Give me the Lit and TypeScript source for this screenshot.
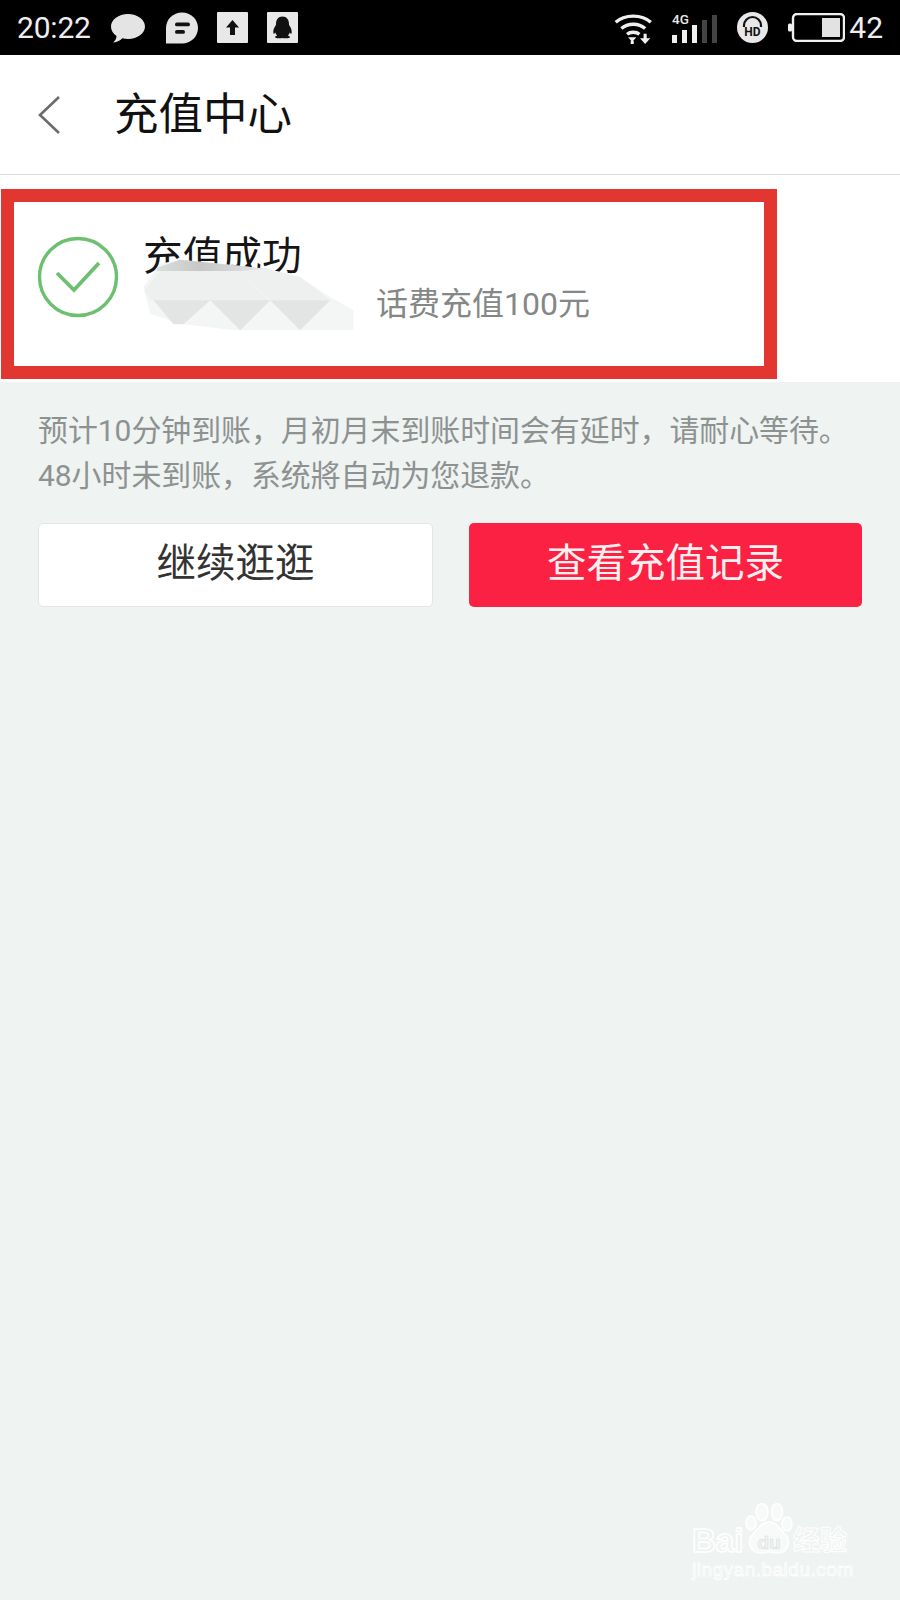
import { LitElement, html, css, svg } from "lit";
import { customElement } from "lit/decorators.js";

@customElement("app-root")
export class AppRoot extends LitElement {
  static styles = css`
    :host {
      display: block;
      position: relative;
      width: 900px;
      height: 1600px;
      overflow: hidden;
      background: #eff3f2;
      font-family: Roboto, "Noto Sans CJK SC", sans-serif;
    }
    .status {
      height: 55px;
      background: #000;
      color: #eee;
      display: flex;
      align-items: center;
      padding: 0 17px;
      font-size: 30px;
      line-height: 55px;
    }
    .status svg { display: block; flex: none; }
    .time { width: 93px; letter-spacing: -0.2px; }
    .s2 { margin-left: 20px; }
    .s3 { margin-left: 19px; }
    .s4 { margin-left: 19px; }
    .spacer { flex: 1; }
    .r1 { margin-left: 19px; }
    .r2 { margin-left: 19px; }
    .r3 { margin-left: 20px; }
    .num { margin-left: 4px; }
    .header {
      height: 119px;
      background: #fff;
      border-bottom: 1px solid #dcdcdc;
      display: flex;
      align-items: center;
      padding-left: 37px;
      box-sizing: content-box;
    }
    .back { display: block; width: 24px; height: 40px; margin-right: 53px; }
    .header h1 {
      margin: 0;
      font-size: 44.5px;
      font-weight: 400;
      color: #111;
      line-height: 1;
      position: relative;
      top: 1px;
    }
    .card {
      position: relative;
      height: 207px;
      background: #fff;
      display: flex;
      align-items: flex-start;
      padding: 62px 0 0 37px;
      box-sizing: border-box;
    }
    .check { display: block; width: 82px; height: 82px; margin-top: -1px; margin-right: 24px; flex: none; }
    .title {
      font-size: 39.700px;
      line-height: 46px;
      margin-top: -3px;
      color: #151515;
    }
    .sub {
      font-size: 32px;
      line-height: 40px;
      color: #848786;
      margin: 4px 0 0 233px;
      white-space: nowrap;
    }
    .annot {
      position: absolute;
      left: 1px;
      top: 14px;
      width: 776px;
      height: 190px;
      box-sizing: border-box;
      border: 13px solid #e23730;
    }
    .smudge {
      position: absolute;
      left: 140px;
      top: 82px;
      width: 217px;
      height: 75px;
      filter: blur(0.6px);
    }
    .note {
      padding: 26px 38px 0;
      font-size: 29.900px;
      line-height: 45px;
      color: #8d9291;
      white-space: nowrap;
    }
    .actions {
      display: flex;
      gap: 36px;
      padding: 25px 38px 0;
    }
    .btn {
      flex: 1;
      height: 84px;
      box-sizing: border-box;
      border-radius: 5px;
      display: flex;
      align-items: center;
      justify-content: center;
      font-size: 39.500px;
      padding-bottom: 12px;
    }
    .ghost { background: #fff; border: 1px solid #e3e6e5; color: #333; }
    .primary { background: #fb2142; color: #fdeef0; }
    .mark {
      position: absolute;
      left: 690px;
      top: 1500px;
      width: 170px;
      height: 84px;
      color: #eff3f2;
      -webkit-text-stroke: 1.500px #fff;
    }
    .mark svg { position: absolute; left: 55px; top: 0; width: 50px; height: 56px; }
    .bai {
      position: absolute;
      left: 2px;
      top: 21px;
      font: 700 33px/40px "Liberation Sans", sans-serif;
    }
    .jy {
      position: absolute;
      left: 103px;
      top: 26px;
      font-size: 27px;
      line-height: 30px;
      font-weight: 700;
      white-space: nowrap;
      -webkit-text-stroke: 1px #fff;
    }
    .url {
      position: absolute;
      left: 2px;
      top: 58px;
      font: 400 19px/24px "Liberation Sans", sans-serif;
      letter-spacing: 0.5px;
      white-space: nowrap;
      -webkit-text-stroke: 0.800px #fff;
    }
    .du {
      font: 700 19px "Liberation Sans", sans-serif;
      fill: #eff3f2;
      stroke: #d9dedc;
      stroke-width: 0.600px;
    }
  `;

  render() {
    return html`
      <div class="status">
        <span class="time">20:22</span>
        <svg width="36" height="30" viewBox="0 0 36 30"><path fill="#e4e4e4" d="M18 1C27.500 1 35 6.800 35 13.500S27.500 26 18 26c-2 0-4-.2-5.700-.7C10.500 27.500 7.500 29 3 29.500c2.400-1.800 3.500-4 3.500-6.500C3 20.600 1 17.300 1 13.500 1 6.800 8.500 1 18 1z"/></svg>
        <svg class="s2" width="32" height="32" viewBox="0 0 32 32"><path fill="#e4e4e4" d="M16 .5C25 .5 32 7.500 32 16S25 31.500 16 31.500H0V16C0 7.500 7 .5 16 .5z"/><rect x="9" y="10.500" width="15" height="3.800" rx="1.900" fill="#111"/><rect x="9" y="18" width="10" height="3.800" rx="1.900" fill="#111"/></svg>
        <svg class="s3" width="31" height="31" viewBox="0 0 31 31"><rect width="31" height="31" rx="1" fill="#e8e8e8"/><path fill="#111" d="M15.500 8l6.500 7.500h-4V23h-5v-7.500H9z"/></svg>
        <svg class="s4" width="31" height="31" viewBox="0 0 31 31"><rect width="31" height="31" rx="1" fill="#e8e8e8"/><path fill="#111" d="M15.500 4.500c4.300 0 6.500 3.200 6.500 7.500 0 1 .3 1.500 1 2.600 1.300 2 2 4.200 1.600 6.600-.2 1-1 .8-1.900-.6-.4 1.300-1 2.200-1.800 2.900 1.300.5 2.200 1 2 1.800-.2.800-2.500 1.200-5 1-.9-.1-1.500-.4-2.400-.4s-1.500.3-2.400.4c-2.500.2-4.800-.2-5-1-.2-.8.700-1.300 2-1.800-.8-.7-1.400-1.600-1.800-2.900-.9 1.400-1.700 1.600-1.900.6-.4-2.400.3-4.600 1.600-6.600.7-1.100 1-1.600 1-2.600 0-4.300 2.200-7.500 6.500-7.500z"/></svg>
        <span class="spacer"></span>
        <svg width="38" height="32" viewBox="0 0 36.500 31" fill="none"><path stroke="#f0f0f0" stroke-width="3.200" d="M1.500 10C10 2 27 2 35.500 10M7 16c6-5.500 17-5.500 23 0M12.500 21.500c3-2.500 9-2.500 12 0"/><path fill="#f0f0f0" d="M13.500 24.500h8L17.500 29zM16 28h3v3h-3zM28.500 21h3v4.500h3.500L30 31l-5-5.500h3.500z"/></svg>
        <svg class="r1" width="47" height="32" viewBox="0 0 47 32"><text x="1" y="12" font-size="13.500" font-weight="500" fill="#e8e8e8" font-family="Roboto, sans-serif">4G</text><rect x="1" y="23" width="5" height="8" fill="#f0f0f0"/><rect x="11" y="18" width="5" height="13" fill="#f0f0f0"/><rect x="21" y="13" width="5" height="18" fill="#f0f0f0"/><rect x="31" y="8" width="5" height="23" fill="#444"/><rect x="41" y="3" width="5" height="28" fill="#444"/></svg>
        <svg class="r2" width="31" height="31" viewBox="0 0 31 31"><circle cx="15.500" cy="15.500" r="15.500" fill="#e8e8e8"/><path d="M7 15V13.500a8.500 8.500 0 0 1 17 0V15" fill="none" stroke="#111" stroke-width="2.200"/><text x="15.500" y="23.500" text-anchor="middle" font-size="12" font-weight="700" fill="#111" font-family="Roboto, sans-serif">HD</text></svg>
        <svg class="r3" width="57" height="29" viewBox="0 0 57 29"><rect x="0" y="10.500" width="4" height="8" rx="1.500" fill="#f0f0f0"/><rect x="5" y="1" width="51" height="27" rx="4" fill="none" stroke="#f0f0f0" stroke-width="2.400"/><rect x="34" y="5" width="18" height="19" fill="#e2e2e2"/></svg>
        <span class="num">42</span>
      </div>

      <div class="header">
        <svg class="back" viewBox="0 0 24 40" fill="none"><path d="M22 2 3 20l19 18" stroke="#6b6b6b" stroke-width="2.600"/></svg>
        <h1>充值中心</h1>
      </div>

      <div class="card">
        <svg class="check" viewBox="0 0 82 82" fill="none">
          <circle cx="41" cy="41" r="38.500" stroke="#6cc070" stroke-width="3.400"/>
          <path d="M20 37l17 17 25-27" stroke="#6cc070" stroke-width="3.800"/>
        </svg>
        <div>
          <div class="title">充值成功</div>
          <div class="sub">话费充值100元</div>
        </div>
        <svg class="smudge" viewBox="420 230 650 225">${svg`
          <defs>
            <linearGradient id="band" x1="0" x2="1" y1="0" y2="0">
              <stop offset="0" stop-color="#dcdddd"/>
              <stop offset="0.4" stop-color="#c6c7c7"/>
              <stop offset="1" stop-color="#e4e5e5"/>
            </linearGradient>
          </defs>
          <path fill="#f4f5f5" d="M430 320 480 250 540 238 800 265 900 290 990 350 1060 390V450H700L540 430 450 400Z"/>
          <path fill="#eeefef" d="M432 330 480 272H720L805 360H450ZM720 272 800 265 900 290 990 360H810Z"/>
          <path fill="url(#band)" d="M470 262 540 238 800 265 720 272H470Z"/>
          <path fill="#e3e4e4" d="M460 360H630L550 432H520ZM630 360H810L720 450ZM810 360H990L900 450Z"/>
        `}</svg>
        <div class="annot"></div>
      </div>

      <div class="note">
        <div>预计10分钟到账，月初月末到账时间会有延时，请耐心等待。</div>
        <div>48小时未到账，系统將自动为您退款。</div>
      </div>

      <div class="actions">
        <div class="btn ghost">继续逛逛</div>
        <div class="btn primary">查看充值记录</div>
      </div>

      <div class="mark">
        <svg viewBox="745 1500 50 56">${svg`
          <g fill="#f8faf9" stroke="#fff" stroke-width="1.500">
            <ellipse cx="762" cy="1512" rx="6" ry="8.500"/>
            <ellipse cx="777" cy="1512" rx="5.500" ry="8.500"/>
            <ellipse cx="751" cy="1523" rx="5" ry="7"/>
            <ellipse cx="787" cy="1524" rx="5" ry="7"/>
            <path d="M769 1522c7 0 10 6 15 11 8 7 5 20-7 20-3 0-5-1-8-1s-5 1-8 1c-12 0-15-13-7-20 5-5 8-11 15-11z"/>
          </g>
          <text class="du" x="769" y="1549" text-anchor="middle">du</text>
        `}</svg>
        <span class="bai">Bai</span>
        <span class="jy">经验</span>
        <span class="url">jingyan.baidu.com</span>
      </div>
    `;
  }
}
